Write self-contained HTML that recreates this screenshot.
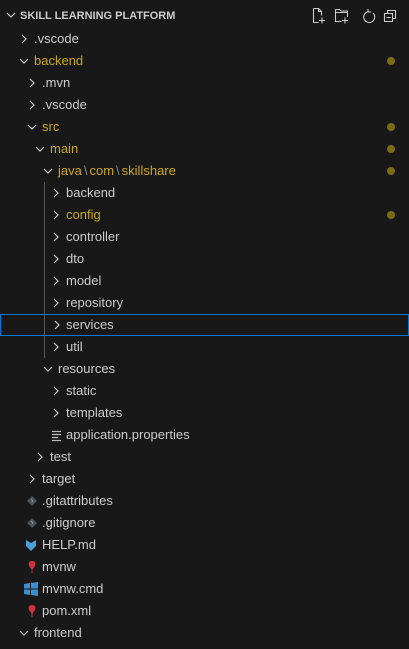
<!DOCTYPE html>
<html><head><style>
body{margin:0;width:409px;height:649px;background:#181818;font-family:"Liberation Sans",sans-serif;font-size:13px;color:#cccccc;overflow:hidden;position:relative}
.h{position:absolute;left:0;top:0;width:409px;height:27px}
.h span{position:absolute;left:20px;top:10px;font-size:11px;font-weight:bold;color:#cccccc}
.r{position:absolute;left:0;width:409px;height:22px;line-height:22px;white-space:nowrap}
.r .t{position:absolute;top:0}
.y{color:#c9a81a}
.sel{box-sizing:border-box;border:1px solid #0078d4;line-height:20px}
.dot{position:absolute;left:387px;top:7px;width:8px;height:8px;border-radius:50%;background:#7d6a14}
.ch{position:absolute;top:3px}
.sep{color:#8a8a8a;margin:0 2px}
.g{position:absolute;left:44px;top:182px;width:1px;height:176px;background:#585858}
</style></head><body>
<div class="h">
<svg style="position:absolute;left:5px;top:9px" width="12" height="12"><path d="M2 4l4 4 4-4" stroke="#ccc" fill="none" stroke-width="1.2"/></svg>
<span>SKILL LEARNING PLATFORM</span>
<svg style="position:absolute;left:310px;top:7px" width="96" height="18" fill="none" stroke="#ccc" stroke-width="1.1">
<path d="M3.5 1.5h5l3 3v4M3.5 1.5v14h5M8.5 1.5v3h3M12 10.5v6M9 13.5h6"/>
<path d="M25.5 2.5h4l1.5 1.5h6.5v6M25.5 2.5v12h6M25.5 5.5h12M35 10.5v6M32 13.5h6"/>
<path d="M59 4.5a5.5 5.5 0 1 0 4 1.5M58 2v3h3.2"/>
<path d="M74.5 6.5h8v8h-8zM77.5 6.5v-3h8v8h-3M76.5 10.5h4"/>
</svg>
</div>
<div class="g"></div>
<div id="rows"></div>
<script>
var R=[[".vscode",0,">",0,0],["backend",0,"v",1,1],[".mvn",1,">",0,0],[".vscode",1,">",0,0],["src",1,"v",1,1],["main",2,"v",1,1],["JAVA",3,"v",1,1],["backend",4,">",0,0],["config",4,">",1,1],["controller",4,">",0,0],["dto",4,">",0,0],["model",4,">",0,0],["repository",4,">",0,0],["services",4,">",0,0],["util",4,">",0,0],["resources",3,"v",0,0],["static",4,">",0,0],["templates",4,">",0,0],["application.properties",4,"p",0,0],["test",2,">",0,0],["target",1,">",0,0],[".gitattributes",1,"g",0,0],[".gitignore",1,"g",0,0],["HELP.md",1,"m",0,0],["mvnw",1,"f",0,0],["mvnw.cmd",1,"w",0,0],["pom.xml",1,"f",0,0],["frontend",0,"v",0,0]];
var h="";
R.forEach(function(e,i){var x=34+8*e[1],top=28+22*i;
var cls="r"+(i==13?" sel":"");
var s='<div class="'+cls+'" style="top:'+top+'px">';
var cx=x-15, ty=(i==13?2:3);
if(e[2]==">")s+='<svg class="ch" style="left:'+cx+'px;top:'+ty+'px" width="10" height="16"><path d="M3 4l4 4-4 4" stroke="#ccc" fill="none" stroke-width="1.2"/></svg>';
else if(e[2]=="v")s+='<svg class="ch" style="left:'+(cx-1)+'px;top:'+ty+'px" width="12" height="16"><path d="M2 6l4 4 4-4" stroke="#ccc" fill="none" stroke-width="1.2"/></svg>';
else if(e[2]=="p")s+='<svg class="ch" style="left:'+(x-16)+'px" width="14" height="16"><path d="M2 4.5h9M2 7.5h9M2 10.5h6M2 13.5h9" stroke="#bbb" stroke-width="1.2"/></svg>';
else if(e[2]=="g")s+='<svg class="ch" style="left:'+(x-17)+'px" width="14" height="16"><path d="M7 3l5 5-5 5-5-5z" fill="#49535c"/><path d="M6 6l2 2-1 1" stroke="#8a9299" fill="none"/></svg>';
else if(e[2]=="m")s+='<svg class="ch" style="left:'+(x-18)+'px" width="14" height="16"><path d="M2 3l5 3 5-3v6l-5 5-5-5z" fill="#4b9fd6"/></svg>';
else if(e[2]=="f")s+='<svg class="ch" style="left:'+(x-17)+'px" width="14" height="16"><path d="M7 2c3 0 4 2 3 5l-3 4-3-4c-1-3 0-5 3-5z" fill="#d0333b"/><path d="M7 10v4" stroke="#d0333b"/></svg>';
else if(e[2]=="w")s+='<svg class="ch" style="left:'+(x-19)+'px" width="16" height="16"><path d="M1 3l6-1v5.5H1zM8 2l7-1v6.5H8zM1 8.5h6V14l-6-1zM8 8.5h7V15l-7-1z" fill="#3b8fd0"/></svg>';
var c=e[3]?' y':'';
var txt=e[0]=="JAVA"?'java<span class="sep">\\</span>com<span class="sep">\\</span>skillshare':e[0];
s+='<span class="t'+c+'" style="left:'+(i==13?x-1:x)+'px">'+txt+'</span>';
if(e[4])s+='<div class="dot"></div>';
s+='</div>';h+=s;});
document.getElementById("rows").innerHTML=h;
</script>
</body></html>
